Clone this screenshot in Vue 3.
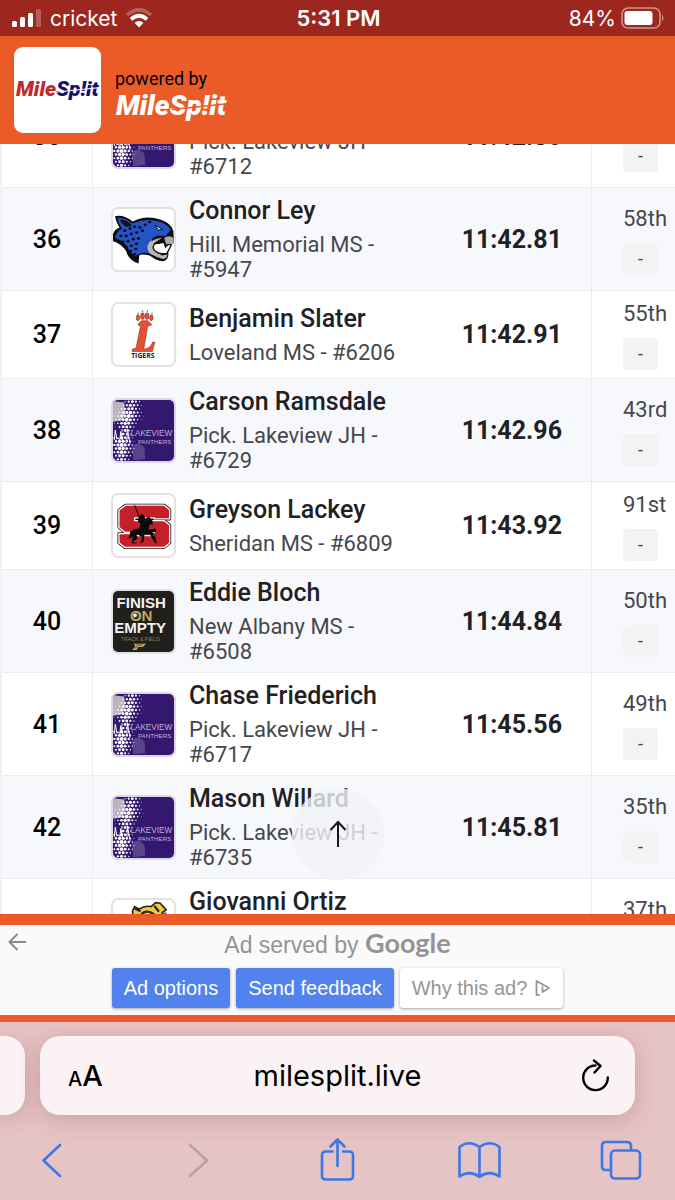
<script setup>
import { onMounted, ref } from "vue";

const results = ref(null);
const address = ref("milesplit.live");

const rows = [
  { place: 35, name: "", team: "Pick. Lakeview JH - #6712", time: "11:42.80", rank: "", logo: "lakeview" },
  { place: 36, name: "Connor Ley", team: "Hill. Memorial MS - #5947", time: "11:42.81", rank: "58th", logo: "jaguar" },
  { place: 37, name: "Benjamin Slater", team: "Loveland MS - #6206", time: "11:42.91", rank: "55th", logo: "tigers" },
  { place: 38, name: "Carson Ramsdale", team: "Pick. Lakeview JH - #6729", time: "11:42.96", rank: "43rd", logo: "lakeview" },
  { place: 39, name: "Greyson Lackey", team: "Sheridan MS - #6809", time: "11:43.92", rank: "91st", logo: "sheridan" },
  { place: 40, name: "Eddie Bloch", team: "New Albany MS - #6508", time: "11:44.84", rank: "50th", logo: "finish" },
  { place: 41, name: "Chase Friederich", team: "Pick. Lakeview JH - #6717", time: "11:45.56", rank: "49th", logo: "lakeview" },
  { place: 42, name: "Mason Willard", team: "Pick. Lakeview JH - #6735", time: "11:45.81", rank: "35th", logo: "lakeview" },
  { place: "", name: "Giovanni Ortiz", team: "", time: "", rank: "37th", logo: "bulldog" }
];

// halftone dots of the Lakeview logo: one cluster at the top, one at the bottom left
const dots = [];
for (let row = 0; row < 17; row++) {
  for (let col = 0; col < 10; col++) {
    const x = 4 + col * 11 + (row % 2) * 5;
    const y = 5 + row * 11;
    const center = row < 9 ? 58 - row * 3 : 26;
    const r = 6.2 - Math.abs(x - center) / 9 - Math.abs(y - (row < 9 ? 50 : 140)) / 26;
    if (r > 1) {
      dots.push({ x, y, r });
    }
  }
}

// spots on the jaguar's neck
const spots = [
  [36, 66], [52, 60], [66, 54], [82, 56], [98, 48], [112, 40], [24, 82], [40, 82], [56, 76], [72, 72], [90, 66],
  [30, 100], [46, 98], [62, 92], [40, 116], [56, 112], [72, 106], [54, 128], [70, 122], [66, 138], [78, 90]
];

function scrollToTop() {
  results.value.scrollTo({ top: 0, behavior: "smooth" });
}

onMounted(() => {
  results.value.scrollTop = 59;
});
</script>

<template>
  <div class="phone">
    <div class="status-bar">
      <div class="status-side">
        <svg viewBox="0 0 30 18" width="30" height="18">
          <rect x="0" y="12" width="5" height="6" rx="1.5" fill="#fff" />
          <rect x="8" y="8" width="5" height="10" rx="1.5" fill="#fff" />
          <rect x="16" y="4" width="5" height="14" rx="1.5" fill="#fff" />
          <rect x="24" y="0" width="5" height="18" rx="1.5" fill="#fff" opacity="0.25" />
        </svg>
        <span>cricket</span>
        <svg viewBox="0 0 28 20" width="28" height="20">
          <path d="M14 19.5 L9.6 14.8 Q14 11.4 18.4 14.8 Z" fill="#fff" />
          <path d="M6 11.4 Q14 4.2 22 11.4" fill="none" stroke="#fff" stroke-width="3.8" />
          <path d="M2 7 Q14 -3.4 26 7" fill="none" stroke="#fff" stroke-width="3.6" opacity="0.25" />
        </svg>
      </div>
      <strong class="clock">5:31 PM</strong>
      <div class="status-side status-right">
        <span>84%</span>
        <svg viewBox="0 0 44 22" width="44" height="22">
          <rect x="1" y="1" width="38" height="20" rx="6" fill="none" stroke="#fff" stroke-width="1.6" opacity="0.5" />
          <rect x="3.5" y="4" width="28" height="14" rx="3" fill="#fff" />
          <path d="M41 7.5 Q44 11 41 14.5 Z" fill="#fff" opacity="0.5" />
        </svg>
      </div>
    </div>

    <header class="brand-bar">
      <a href="#" class="brand-tile" aria-label="MileSplit">
        <svg viewBox="0 0 86 30" width="86" height="30">
          <text x="1" y="21" class="mark mark-small"><tspan fill="#c02a2c">Mile</tspan><tspan fill="#16116b">Sp!it</tspan></text>
          <path d="M42 17 L86 12.5" stroke="#fff" stroke-width="1.2" />
        </svg>
      </a>
      <div class="powered">
        <span class="powered-label">powered by</span>
        <svg viewBox="0 0 116 32" width="116" height="32">
          <text x="1" y="25" class="mark mark-large" fill="#fff">MileSp!it</text>
          <path d="M57 19.500 L115 13.500" stroke="#eb5b28" stroke-width="1.4" />
        </svg>
      </div>
    </header>

    <main class="results-shell">
      <div ref="results" class="results">
        <table class="results-table">
          <tbody>
            <tr v-for="(row, index) in rows" :key="index">
              <td class="place">{{ row.place }}</td>
              <td class="logo-cell">
                <div class="team-logo" :class="row.logo">
                  <svg v-if="row.logo === 'lakeview'" viewBox="0 0 186 186">
                    <rect width="186" height="186" fill="#34186f" />
                    <path d="M0 4 L34 8 L38 40 L28 62 L0 66 Z" fill="#b9b6bd" />
                    <path d="M58 140 Q80 126 96 146 L98 180 L62 184 Z" fill="#5a4488" />
                    <circle v-for="(dot, n) in dots" :key="n" :cx="dot.x" :cy="dot.y" :r="dot.r" fill="#fff" />
                    <path d="M0 84 H8 L12 70 L18 90 L24 82 L28 104 L20 116 L0 112 Z" fill="#34186f" />
                    <path d="M4 122 L7 92 L12 120 M20 126 L24 96 L30 128 M42 130 L44 88 L52 134" fill="none" stroke="#fff" stroke-width="3" />
                    <text x="53" y="109" class="lake-text">LAKEVIEW</text>
                    <text x="76" y="133" class="panther-text">PANTHERS</text>
                  </svg>

                  <svg v-else-if="row.logo === 'jaguar'" viewBox="0 0 186 186">
                    <path d="M6 22 Q32 16 60 38 Q100 18 144 32 Q178 44 184 66 L186 104 L176 108 L168 130 Q172 150 158 158 Q140 164 112 142 Q84 136 80 142 L78 166 Q48 158 40 128 Q26 106 0 98 V76 Q8 58 20 58 Q10 42 6 22 Z" fill="#0c0d12" />
                    <path d="M14 28 Q36 26 58 44 Q100 26 140 38 Q166 46 176 64 L160 82 Q122 84 108 104 Q104 122 110 134 Q84 130 68 144 Q50 132 42 112 Q28 96 6 86 Q14 66 28 60 Q16 44 14 28 Z" fill="#2454c8" />
                    <path d="M20 32 Q44 32 58 50 L42 56 Q26 46 20 32 Z" fill="#11141f" />
                    <path d="M110 134 Q98 112 116 96 L152 86 L126 104 Q122 128 150 142 L166 138 Q164 154 150 152 Q132 148 110 134 Z" fill="#b5b5b8" />
                    <path d="M156 88 Q172 78 184 88 L186 106 L162 108 Z" fill="#aaaaae" />
                    <path d="M126 106 L156 102 L160 116 L168 108 L178 110 L164 136 L148 136 Q126 132 122 118 Z" fill="#fff" stroke="#0c0d12" stroke-width="4" />
                    <path d="M128 50 L152 62 L138 64 Z" fill="#fff" stroke="#0c0d12" stroke-width="3" />
                    <path d="M118 96 Q134 78 156 86" fill="none" stroke="#0c0d12" stroke-width="5" />
                    <ellipse v-for="([x, y], n) in spots" :key="n" :cx="x" :cy="y" rx="5" ry="4" fill="#0c0d12" />
                  </svg>

                  <svg v-else-if="row.logo === 'tigers'" viewBox="0 0 186 186">
                    <g fill="#e55035" stroke="#6e2018" stroke-width="1.5">
                      <ellipse cx="76" cy="42" rx="5" ry="9" />
                      <ellipse cx="90" cy="37" rx="6" ry="10" />
                      <ellipse cx="104" cy="37" rx="6" ry="10" />
                      <ellipse cx="117" cy="42" rx="5" ry="9" />
                      <path d="M76 64 Q84 48 96 51 Q108 47 118 64 L106 67 L94 137 Q112 138 121 116 L128 116 L120 145 H58 L60 137 L70 135 L84 67 Z" />
                    </g>
                    <path d="M76 27 V32 M90 20 V25 M105 19 V24 M119 27 V32" stroke="#667a75" stroke-width="4" />
                    <text x="91" y="166" class="tiger-text">TIGERS</text>
                  </svg>

                  <svg v-else-if="row.logo === 'sheridan'" viewBox="0 0 186 186">
                    <g stroke-linejoin="round">
                      <path d="M38 31 H156 L173 45 V73 H126 V70 H66 V78 H156 L173 92 V146 L156 160 H36 L18 146 V118 H62 V124 H126 V114 H36 L18 98 V46 Z" fill="none" stroke="#171717" stroke-width="9" />
                      <path d="M38 31 H156 L173 45 V73 H126 V70 H66 V78 H156 L173 92 V146 L156 160 H36 L18 146 V118 H62 V124 H126 V114 H36 L18 98 V46 Z" fill="#c4202a" stroke="#fff" stroke-width="4" />
                    </g>
                    <path d="M66 31 L80 68" stroke="#0b0b0b" stroke-width="3" />
                    <path d="M78 66 L88 58 L98 66 L96 78 L104 68 L110 66 L120 78 L122 90 L112 90 L108 106 L130 102 L132 112 L120 114 L132 142 L128 146 L112 120 L96 120 L94 142 L84 148 L88 128 L72 118 L74 134 L58 144 L60 126 L50 134 L52 112 L66 104 L80 102 L84 88 L76 80 Z" fill="#0b0b0b" />
                    <path d="M54 122 L46 132 M108 118 L126 118 L132 148 M66 122 L58 146 H72" fill="none" stroke="#0b0b0b" stroke-width="3" />
                  </svg>

                  <svg v-else-if="row.logo === 'finish'" viewBox="0 0 186 186">
                    <rect width="186" height="186" fill="#211f1c" />
                    <text x="86" y="90" class="finish-text finish-on">ON</text>
                    <text x="86" y="53" class="finish-text">FINISH</text>
                    <circle cx="67" cy="74" r="7" fill="#eee" stroke="#6a5c35" stroke-width="3" />
                    <text x="83" y="127" class="finish-text">EMPTY</text>
                    <text x="83" y="151" class="track-text">TRACK &amp; FIELD</text>
                    <path d="M63 161 H101 L91 171 H76 L73 179 L59 181 L68 168 Z" fill="#c2ae68" />
                    <path d="M70 165 H90 M66 174 L74 170" stroke="#211f1c" stroke-width="2" />
                  </svg>

                  <svg v-else viewBox="0 0 186 186">
                    <path d="M60 60 V32 L66 20 L80 28 Q96 16 116 20 L130 8 L144 10 L162 30 L150 38 L146 60 Z" fill="#f1c93c" stroke="#272320" stroke-width="5" />
                    <path d="M82 50 Q98 24 126 44 M66 26 L84 34 M126 18 L140 36" fill="none" stroke="#272320" stroke-width="7" />
                    <path d="M148 38 L164 38 L158 56 H146 Z" fill="#4c5596" />
                  </svg>
                </div>
              </td>
              <td class="athlete">
                <div class="athlete-name">{{ row.name }}</div>
                <div class="athlete-team" :class="{ 'team-empty': !row.team }">{{ row.team }}</div>
              </td>
              <td class="time">{{ row.time }}</td>
              <td class="rank">
                <div class="rank-text">{{ row.rank }}</div>
                <span class="rank-badge">-</span>
              </td>
            </tr>
          </tbody>
        </table>
      </div>
      <button type="button" class="to-top" aria-label="Back to top" @click="scrollToTop">
        <svg viewBox="0 0 20 28" width="20" height="28">
          <path d="M10 27 V2 M2.5 10 L10 2 L17.5 10" fill="none" stroke="#15161a" stroke-width="2" />
        </svg>
      </button>
    </main>

    <aside class="ad">
      <button type="button" class="ad-back" aria-label="Back">
        <svg viewBox="0 0 18 18" width="18" height="18">
          <path d="M18 9 H2 M9.5 1 L1.5 9 L9.5 17" fill="none" stroke="#8b8b8b" stroke-width="2" />
        </svg>
      </button>
      <p class="ad-title">Ad served by <span class="google">Google</span></p>
      <div class="ad-actions">
        <button type="button" class="ad-button">Ad options</button>
        <button type="button" class="ad-button">Send feedback</button>
        <button type="button" class="ad-button ad-why">
          Why this ad?
          <svg viewBox="0 0 16 18" width="16" height="18">
            <path d="M4.5 16 H1.5 V2 L14 9 L7.5 13 V7.5" fill="none" stroke="#959595" stroke-width="1.8" stroke-linejoin="round" />
            <circle cx="7.5" cy="5.6" r="1" fill="#959595" />
          </svg>
        </button>
      </div>
    </aside>

    <footer class="browser">
      <div class="tabs">
        <div class="tab-edge"></div>
        <div class="address-bar">
          <button type="button" class="bar-button" aria-label="Page settings">
            <span class="letter-small">A</span><span class="letter-large">A</span>
          </button>
          <input v-model="address" type="text" class="address" aria-label="Address" />
          <button type="button" class="bar-button bar-reload" aria-label="Reload">
            <svg viewBox="0 0 30 34" width="30" height="34">
              <path d="M15.5 6.5 A12.3 12.3 0 1 0 27.8 18.5" fill="none" stroke="#000" stroke-width="2.4" stroke-linecap="round" />
              <path d="M14 1.5 L20.5 7 L14.5 13.5" fill="none" stroke="#000" stroke-width="2.4" stroke-linecap="round" stroke-linejoin="round" />
            </svg>
          </button>
        </div>
      </div>
      <nav class="toolbar">
        <button type="button" class="tool" aria-label="Back">
          <svg viewBox="0 0 44 44" width="44" height="44">
            <path d="M29 7 L12.5 22.5 L29 38" />
          </svg>
        </button>
        <button type="button" class="tool tool-off" aria-label="Forward">
          <svg viewBox="0 0 44 44" width="44" height="44">
            <path d="M17 7 L34 22.5 L17 38" />
          </svg>
        </button>
        <button type="button" class="tool" aria-label="Share">
          <svg viewBox="0 0 44 44" width="44" height="44">
            <path d="M16.5 13.5 H10 Q6 13.5 6 17 V38 Q6 41.5 10 41.5 H33 Q37 41.5 37 38 V17 Q37 13.5 33 13.5 H27 M21.5 28 V2 M14.5 8.5 L21.5 1.5 L28.5 8.5" />
          </svg>
        </button>
        <button type="button" class="tool" aria-label="Bookmarks">
          <svg viewBox="0 0 44 44" width="44" height="44">
            <path d="M21.5 9 Q11 1.5 1.5 9 V38.5 Q12 31.5 21.5 39 Q31 31.5 41.5 38.5 V9 Q32 1.5 21.5 9 V39" />
          </svg>
        </button>
        <button type="button" class="tool" aria-label="Tabs">
          <svg viewBox="0 0 44 44" width="44" height="44">
            <rect x="11" y="12.5" width="29" height="28" rx="4" />
            <path d="M11 32 H5.5 Q2 32 2 28.5 V7.5 Q2 4 5.5 4 H27 Q31 4 31 8 V12" />
          </svg>
        </button>
      </nav>
    </footer>
  </div>
</template>

<style>
body {
  margin: 0;
}
</style>

<style scoped>
.phone {
  display: flex;
  flex-direction: column;
  height: 100vh;
  overflow: hidden;
  background: #ffffff;
  color: #000000;
  font-family: Roboto, "Liberation Sans", sans-serif;
}

button {
  margin: 0;
  padding: 0;
  border: 0;
  background: none;
  color: inherit;
  font: inherit;
}

svg {
  display: block;
}

.status-bar {
  display: flex;
  flex: none;
  align-items: center;
  height: 36px;
  padding: 0 10px 0 12px;
  background: #9d271f;
  color: #ffffff;
  font-family: Inter, sans-serif;
  font-size: 22px;
}

.status-side {
  display: flex;
  flex: 1;
  align-items: center;
  gap: 8px;
  font-size: 21px;
}

.status-right {
  justify-content: flex-end;
  gap: 5px;
}

.clock {
  font-weight: 600;
}

.brand-bar {
  display: flex;
  flex: none;
  align-items: center;
  gap: 14px;
  height: 108px;
  padding: 0 14px;
  background: #eb5b28;
}

.brand-tile {
  display: grid;
  place-items: center;
  width: 87px;
  height: 86px;
  border-radius: 9px;
  background: #ffffff;
}

.powered {
  display: grid;
  padding-top: 10px;
}

.powered-label {
  font-size: 18px;
  line-height: 22px;
}

.mark {
  font-family: Roboto, sans-serif;
  font-style: italic;
  font-weight: 900;
}

.mark-small {
  font-size: 21px;
}

.mark-large {
  font-size: 28px;
}

.results-shell {
  position: relative;
  flex: 1;
  min-height: 0;
}

.results {
  height: 100%;
  overflow-y: auto;
  scrollbar-width: none;
}

.results-table {
  width: 100%;
  border-collapse: separate;
  border-spacing: 0;
  border-left: 2px solid #f1f2f4;
}

.results-table td {
  padding: 0;
  border-bottom: 1px solid #ebecef;
  vertical-align: middle;
}

.results-table tr:nth-child(even) td {
  background: #f7f8fb;
}

.results-table .place {
  width: 90px;
  border-right: 1px solid #ebecef;
  font-size: 25px;
  font-weight: 500;
  text-align: center;
}

.results-table .logo-cell {
  width: 78px;
  padding-left: 18px;
}

.team-logo {
  box-sizing: border-box;
  width: 65px;
  height: 65px;
  overflow: hidden;
  border: 2px solid #e2e2e5;
  border-radius: 7px;
  background: #ffffff;
}

.team-logo.lakeview {
  border-color: #dcd6e8;
}

.lake-text,
.panther-text {
  fill: #bcaed2;
  font-family: "Liberation Sans", sans-serif;
}

.lake-text {
  font-size: 25px;
}

.panther-text {
  font-size: 19px;
}

.tiger-text {
  fill: #222222;
  font-family: "Open Sans", sans-serif;
  font-size: 21px;
  font-weight: 700;
  text-anchor: middle;
}

.finish-text {
  fill: #f3f1ee;
  font-family: "Liberation Sans", sans-serif;
  font-size: 46px;
  font-weight: 700;
  text-anchor: middle;
}

.finish-on {
  fill: #b9ab64;
}

.track-text {
  fill: #8b805f;
  font-family: "Liberation Sans", sans-serif;
  font-size: 16px;
  text-anchor: middle;
}

.results-table .athlete {
  padding: 8px 0;
}

.athlete-name {
  min-height: 30px;
  margin-bottom: 6px;
  color: #1f2125;
  font-size: 25px;
  font-weight: 500;
  line-height: 30px;
}

.athlete-team {
  max-width: 215px;
  color: #46474d;
  font-size: 22px;
  line-height: 25px;
}

.team-empty {
  min-height: 50px;
}

.results-table .time {
  width: 152px;
  padding-right: 29px;
  border-right: 1px solid #ebecef;
  color: #1f2125;
  font-size: 25px;
  font-weight: 700;
  text-align: right;
}

.results-table .rank {
  width: 52px;
  padding: 11px 0 8px 31px;
}

.rank-text {
  min-height: 24px;
  margin-bottom: 12px;
  color: #46474d;
  font-size: 22px;
  line-height: 24px;
}

.rank-badge {
  display: block;
  width: 35px;
  border-radius: 4px;
  background: #f3f3f4;
  color: #46474d;
  font-size: 18px;
  line-height: 32px;
  text-align: center;
}

.to-top {
  position: absolute;
  bottom: 34px;
  left: 50%;
  display: grid;
  place-items: center;
  width: 92px;
  height: 92px;
  border-radius: 50%;
  background: rgba(241, 242, 248, 0.8);
  transform: translateX(-50%);
}

.ad {
  position: relative;
  flex: none;
  height: 90px;
  border-top: 11px solid #eb5b28;
  border-bottom: 7px solid #eb5b28;
  background: #fafafa;
  color: #949494;
  font-family: "Liberation Sans", sans-serif;
}

.ad-back {
  position: absolute;
  top: 8px;
  left: 8px;
}

.ad-title {
  margin: 0;
  padding-top: 2px;
  font-size: 23px;
  line-height: 32px;
  text-align: center;
}

.google {
  font-family: Lato, sans-serif;
  font-size: 27px;
  font-weight: 700;
}

.ad-actions {
  display: flex;
  justify-content: center;
  gap: 6px;
  padding-top: 7px;
}

.ad-button {
  display: flex;
  align-items: center;
  gap: 8px;
  height: 40px;
  padding: 0 12px;
  border-radius: 3px;
  background: #5282ee;
  box-shadow: 0 1px 3px rgba(0, 0, 0, 0.35);
  color: #ffffff;
  font-size: 20px;
}

.ad-why {
  background: #ffffff;
  color: #959595;
}

.browser {
  flex: none;
  height: 178px;
  background: #e6c3c4;
}

.tabs {
  display: flex;
  gap: 15px;
  padding: 14px 40px 0 0;
}

.tab-edge,
.address-bar {
  height: 79px;
  background: #fbf2f3;
  box-shadow: 0 4px 22px rgba(120, 50, 50, 0.24);
}

.tab-edge {
  width: 25px;
  border-radius: 0 20px 20px 0;
}

.address-bar {
  display: flex;
  flex: 1;
  align-items: center;
  min-width: 0;
  padding: 0 25px;
  border-radius: 20px;
  font-family: Inter, sans-serif;
}

.bar-button {
  display: flex;
  flex: none;
  align-items: baseline;
  box-sizing: border-box;
  width: 44px;
  padding-left: 3px;
}

.bar-reload {
  justify-content: flex-end;
}

.letter-small,
.letter-large {
  font-weight: 500;
}

.letter-small {
  font-size: 20px;
}

.letter-large {
  font-size: 29px;
}

.address {
  flex: 1;
  min-width: 0;
  padding: 0;
  border: 0;
  outline: none;
  background: none;
  color: #000000;
  font-family: Inter, sans-serif;
  font-size: 29px;
  text-align: center;
}

.toolbar {
  display: flex;
  justify-content: space-between;
  padding: 23px 31px 0;
}

.tool svg {
  fill: none;
  stroke: #3b78e7;
  stroke-width: 2.6;
  stroke-linecap: round;
  stroke-linejoin: round;
}

.tool-off svg {
  stroke: #b9a1a2;
}
</style>
